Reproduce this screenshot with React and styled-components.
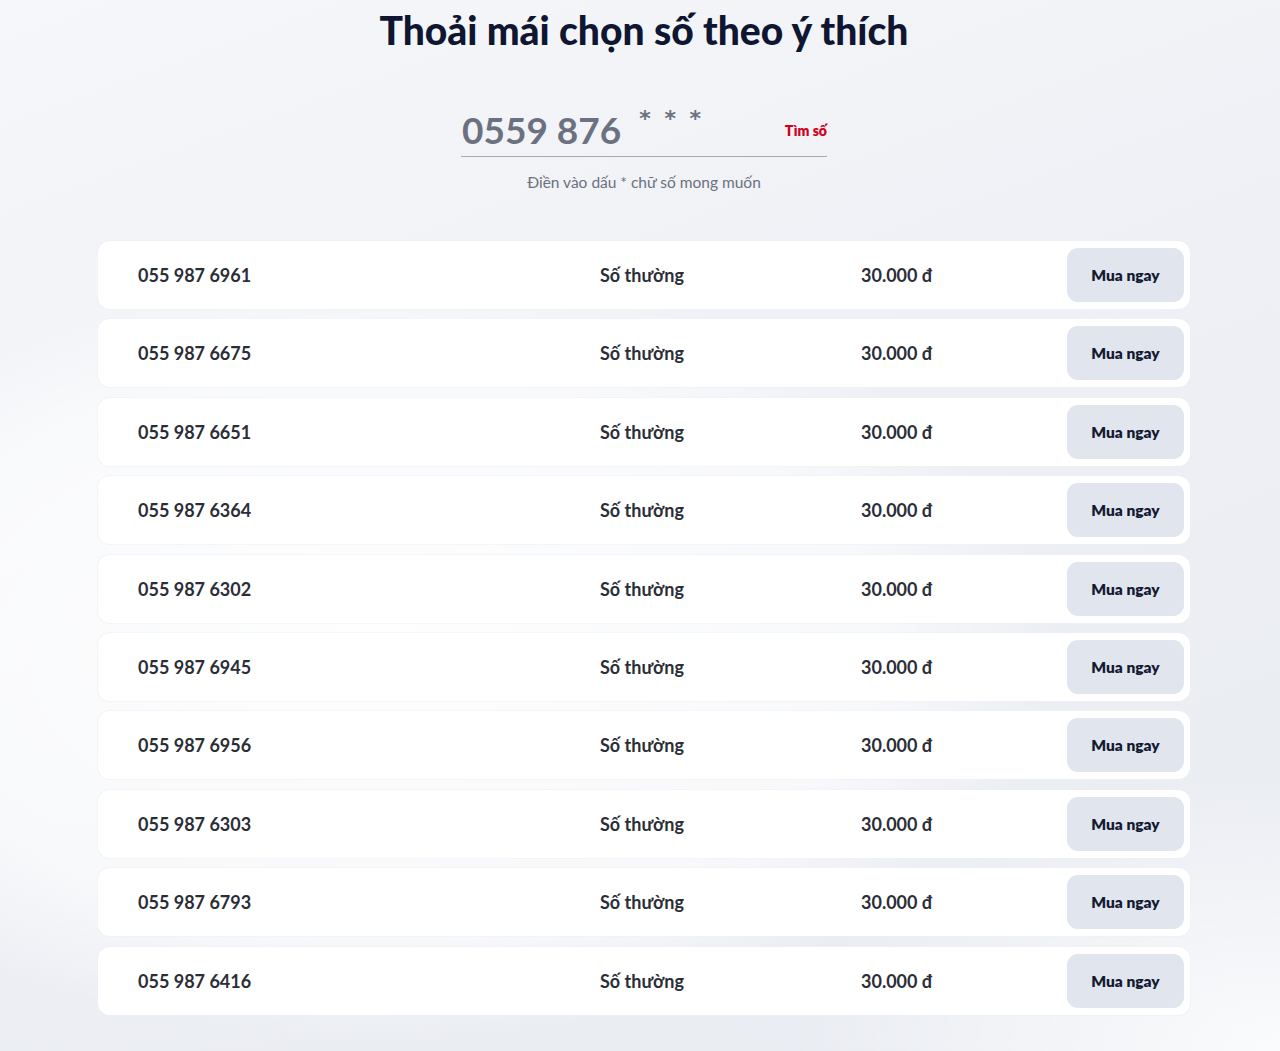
import React from 'react'
import styled, { createGlobalStyle } from 'styled-components'

const GlobalStyle = createGlobalStyle`
  html, body {
    margin: 0;
    padding: 0;
  }
  body {
    font-family: 'Lato', 'Liberation Sans', sans-serif;
    background: #f1f3f7;
  }
`

const Page = styled.div`
  min-height: 1051px;
  box-sizing: border-box;
  padding: 7px 0 30px;
  background:
    radial-gradient(ellipse 900px 520px at 30% 62%, rgba(255,255,255,0.95) 0%, rgba(255,255,255,0.6) 55%, rgba(255,255,255,0) 75%),
    radial-gradient(ellipse 700px 400px at 100% 100%, rgba(255,255,255,0.8) 0%, rgba(255,255,255,0) 70%),
    linear-gradient(160deg, #f6f7fa 0%, #eef0f5 45%, #e9ecf2 100%);
`

const Title = styled.h1`
  margin: 0;
  text-align: center;
  font-size: 39px;
  line-height: 46px;
  font-weight: 900;
  color: #0f1631;
  padding-left: 8px;
`

const SearchBox = styled.div`
  width: 366px;
  margin: 51px auto 0;
  padding-left: 8px;
`

const SearchLine = styled.div`
  display: flex;
  align-items: flex-end;
  height: 46px;
  border-bottom: 1px solid #a5a9b2;
  padding-bottom: 6px;
`

const Digits = styled.span`
  font-size: 37px;
  line-height: 40px;
  font-weight: 700;
  color: #6b7180;
  margin-left: 1px;
`

const Stars = styled.span`
  font-family: 'DejaVu Sans', sans-serif;
  font-size: 22px;
  font-weight: 700;
  color: #6b7180;
  letter-spacing: 3px;
  align-self: flex-start;
  margin-left: 18px;
  line-height: 22px;
  margin-top: 4px;
`

const FindButton = styled.button`
  margin-left: auto;
  align-self: center;
  background: none;
  border: none;
  padding: 0;
  font-family: inherit;
  font-size: 14px;
  font-weight: 800;
  color: #d0021b;
  cursor: pointer;
  margin-top: 6px;
`

const Hint = styled.p`
  margin: 16px 0 0;
  text-align: center;
  font-size: 15.5px;
  color: #6b7180;
`

const List = styled.div`
  width: 1092px;
  margin: 50px auto 0;
  display: flex;
  flex-direction: column;
  gap: 10.4px;
  transform: translateX(4px);
`

const Row = styled.div`
  display: grid;
  grid-template-columns: 462px 261px 1fr 117px;
  align-items: center;
  height: 68px;
  box-sizing: border-box;
  padding: 0 6px 0 40px;
  background: #ffffff;
  border-radius: 12px;
  box-shadow: 0 0 0 1px rgba(236, 239, 245, 0.5);
  font-size: 18px;
  font-weight: 700;
  color: #2b2e37;
`

const Cell = styled.span`
  white-space: nowrap;
`

const BuyButton = styled.button`
  height: 54px;
  border: none;
  border-radius: 11px;
  background: #e1e5ed;
  font-family: inherit;
  font-size: 15.5px;
  font-weight: 800;
  color: #141a33;
  cursor: pointer;
`

const numbers = [
  '055 987 6961',
  '055 987 6675',
  '055 987 6651',
  '055 987 6364',
  '055 987 6302',
  '055 987 6945',
  '055 987 6956',
  '055 987 6303',
  '055 987 6793',
  '055 987 6416',
]

export default function App() {
  return (
    <>
      <GlobalStyle />
      <Page>
        <Title>Thoải mái chọn số theo ý thích</Title>
        <SearchBox>
          <SearchLine>
            <Digits>0559 876</Digits>
            <Stars>* * *</Stars>
            <FindButton>Tìm số</FindButton>
          </SearchLine>
          <Hint>Điền vào dấu * chữ số mong muốn</Hint>
        </SearchBox>
        <List>
          {numbers.map((n) => (
            <Row key={n}>
              <Cell>{n}</Cell>
              <Cell>Số thường</Cell>
              <Cell>30.000 đ</Cell>
              <BuyButton>Mua ngay</BuyButton>
            </Row>
          ))}
        </List>
      </Page>
    </>
  )
}
